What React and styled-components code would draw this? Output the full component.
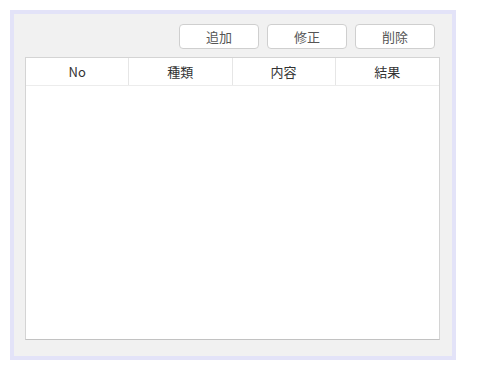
import styled, { createGlobalStyle } from "styled-components";

const GlobalStyle = createGlobalStyle`
  body {
    margin: 0;
    background: #ffffff;
    font-family: "Noto Sans CJK JP", "Noto Sans", sans-serif;
  }
`;

const columns = ["No", "種類", "内容", "結果"];
const actions = ["追加", "修正", "削除"];

export default function App() {
  return (
    <>
      <GlobalStyle />
      <Frame>
        <Toolbar>
          {actions.map((label) => (
            <ActionButton key={label}>{label}</ActionButton>
          ))}
        </Toolbar>
        <Table>
          <HeaderRow>
            {columns.map((col, i) => (
              <HeaderCell key={col} $last={i === columns.length - 1}>
                {col}
              </HeaderCell>
            ))}
          </HeaderRow>
          <Body />
        </Table>
      </Frame>
    </>
  );
}

const Frame = styled.div`
  box-sizing: border-box;
  margin: 10px;
  width: 446px;
  height: 350px;
  border: 4px solid #e3e3f8;
  background-color: #f1f1f1;
  padding: 10px 12px 16px 11px;
  display: flex;
  flex-direction: column;
`;

const Toolbar = styled.div`
  display: flex;
  justify-content: flex-end;
  gap: 8px;
  padding-right: 5px;
  height: 25px;
  margin-bottom: 8px;
`;

const ActionButton = styled.button`
  box-sizing: border-box;
  width: 80px;
  height: 25px;
  border: 1px solid #cfcfcf;
  border-radius: 4px;
  background-color: #ffffff;
  color: #555555;
  font-family: "Noto Sans CJK JP", sans-serif;
  font-size: 13px;
  padding: 0;
  line-height: 1;
`;

const Table = styled.div`
  box-sizing: border-box;
  flex: 1;
  border: 1px solid #d4d4d4;
  border-bottom-color: #c2c2c2;
  background-color: #ffffff;
  display: flex;
  flex-direction: column;
`;

const HeaderRow = styled.div`
  display: grid;
  grid-template-columns: repeat(4, 1fr);
  height: 27px;
  border-bottom: 1px solid #ececec;
`;

const HeaderCell = styled.div`
  display: flex;
  align-items: center;
  justify-content: center;
  font-size: 13px;
  color: #333333;
  border-right: ${(p) => (p.$last ? "none" : "1px solid #e6e6e6")};
`;

const Body = styled.div`
  flex: 1;
`;
